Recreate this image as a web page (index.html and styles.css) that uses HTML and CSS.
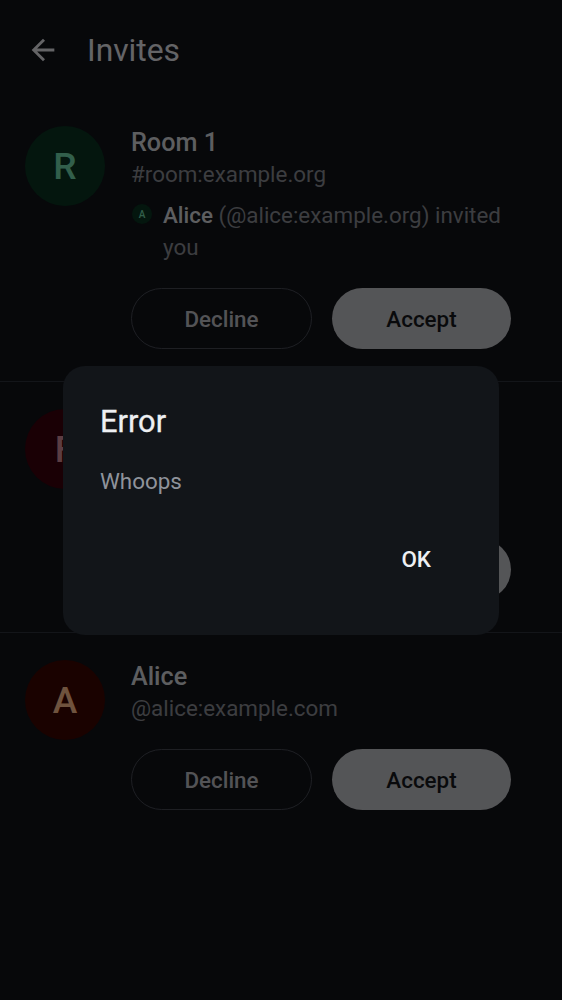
FILE: index.html
```html
<!DOCTYPE html>
<html lang="en">
<head>
<meta charset="utf-8">
<title>Invites</title>
<link rel="stylesheet" href="styles.css">
</head>
<body>
<div class="screen">
  <header class="topbar">
    <svg class="back" viewBox="0 0 24 24" width="34" height="34" aria-hidden="true"><path d="M20 11H7.83l5.59-5.59L12 4l-8 8 8 8 1.41-1.41L7.83 13H20v-2z"/></svg>
    <h1 class="title">Invites</h1>
  </header>

  <section class="invite">
    <div class="avatar avatar-green">R</div>
    <div class="body">
      <div class="name">Room 1</div>
      <div class="sub">#room:example.org</div>
      <div class="inviter">
        <div class="mini avatar-green">A</div>
        <div class="inviter-text"><strong>Alice</strong> (@alice:example.org) invited you</div>
      </div>
      <div class="actions">
        <button class="btn btn-outline">Decline</button>
        <button class="btn btn-filled">Accept</button>
      </div>
    </div>
  </section>

  <section class="invite">
    <div class="avatar avatar-red">F</div>
    <div class="body">
      <div class="name">Foo</div>
      <div class="sub">#foo:example.org</div>
      <div class="inviter">
        <div class="mini avatar-orange">B</div>
        <div class="inviter-text"><strong>Bob</strong> invited you</div>
      </div>
      <div class="actions">
        <button class="btn btn-outline">Decline</button>
        <button class="btn btn-filled">Accept</button>
      </div>
    </div>
  </section>

  <section class="invite">
    <div class="avatar avatar-orange">A</div>
    <div class="body">
      <div class="name">Alice</div>
      <div class="sub">@alice:example.com</div>
      <div class="actions">
        <button class="btn btn-outline">Decline</button>
        <button class="btn btn-filled">Accept</button>
      </div>
    </div>
  </section>
</div>

<div class="scrim">
  <div class="dialog" role="alertdialog">
    <h2 class="dialog-title">Error</h2>
    <p class="dialog-text">Whoops</p>
    <div class="dialog-actions">
      <button class="text-btn">OK</button>
    </div>
  </div>
</div>
</body>
</html>
```

FILE: styles.css
```css
* { box-sizing: border-box; }

html, body {
  margin: 0;
  padding: 0;
  height: 100%;
}

body {
  background: #101218;
  font-family: Roboto, "Noto Sans", "Liberation Sans", sans-serif;
  color: #cfd0d4;
  overflow: hidden;
}

.screen {
  min-height: 100%;
}

.topbar {
  height: 99px;
  display: flex;
  align-items: center;
}

.back {
  fill: #dedee2;
  margin-left: 26px;
  flex: none;
}

.title {
  margin: 0 0 0 27px;
  font-size: 31.8px;
  font-weight: 400;
  color: #dedee2;
  line-height: 40px;
}

.invite {
  display: flex;
  align-items: flex-start;
  gap: 26px;
  padding: 27px 51px 32px 25px;
  border-bottom: 1px solid #2c2f38;
}

.invite:last-child { border-bottom: none; }

.avatar {
  width: 80px;
  height: 80px;
  border-radius: 50%;
  flex: none;
  display: flex;
  align-items: center;
  justify-content: center;
  font-size: 37px;
  font-weight: 500;
}

.avatar-green { background: #09311f; color: #6fd3a7; }
.avatar-red { background: #3a000c; color: #cc8893; }
.avatar-orange { background: #3a0600; color: #f5b88a; }

.body {
  flex: 1;
  min-width: 0;
}

.name {
  font-size: 25.2px;
  font-weight: 500;
  line-height: 33px;
  color: #cfd0d4;
}

.sub {
  font-size: 22.4px;
  line-height: 31px;
  color: #85878e;
}

.inviter {
  display: flex;
  align-items: flex-start;
  gap: 11px;
  margin-top: 9px;
}

.mini {
  width: 20px;
  height: 20px;
  border-radius: 50%;
  flex: none;
  display: flex;
  align-items: center;
  justify-content: center;
  font-size: 10px;
  font-weight: 500;
  margin-top: 5px;
  margin-left: 1px;
}

.inviter-text {
  font-size: 22.4px;
  line-height: 32px;
  color: #85878e;
}

.inviter-text strong {
  font-weight: 500;
  color: #cfd0d4;
}

.actions {
  display: flex;
  gap: 20px;
  margin-top: 25px;
}

.btn {
  flex: 1;
  height: 61px;
  border-radius: 31px;
  font-family: inherit;
  font-size: 22.4px;
  font-weight: 500;
  cursor: pointer;
}

.btn-outline {
  background: transparent;
  border: 1.5px solid #43464f;
  color: #b8b9bf;
}

.btn-filled {
  background: #bbbcc0;
  border: none;
  color: #16171b;
}

.scrim {
  position: fixed;
  inset: 0;
  background: rgba(0, 0, 0, 0.55);
  display: flex;
  align-items: center;
  justify-content: center;
}

.dialog {
  width: 436px;
  background: #121519;
  border-radius: 22px;
  padding: 34px 34px 42px 37px;
}

.dialog-title {
  margin: 0;
  font-size: 30.8px;
  font-weight: 400;
  line-height: 44px;
  color: #eef0f3;
  -webkit-text-stroke: 0.3px #eef0f3;
}

.dialog-text {
  margin: 22px 0 0;
  font-size: 22.4px;
  line-height: 31px;
  color: #8f939b;
}

.dialog-actions {
  margin-top: 29px;
  display: flex;
  justify-content: flex-end;
}

.text-btn {
  height: 67px;
  padding: 0 34px 0 34px;
  background: transparent;
  border: none;
  font-family: inherit;
  font-size: 22.4px;
  font-weight: 500;
  color: #eef0f3;
  border-radius: 34px;
  cursor: pointer;
}
```
